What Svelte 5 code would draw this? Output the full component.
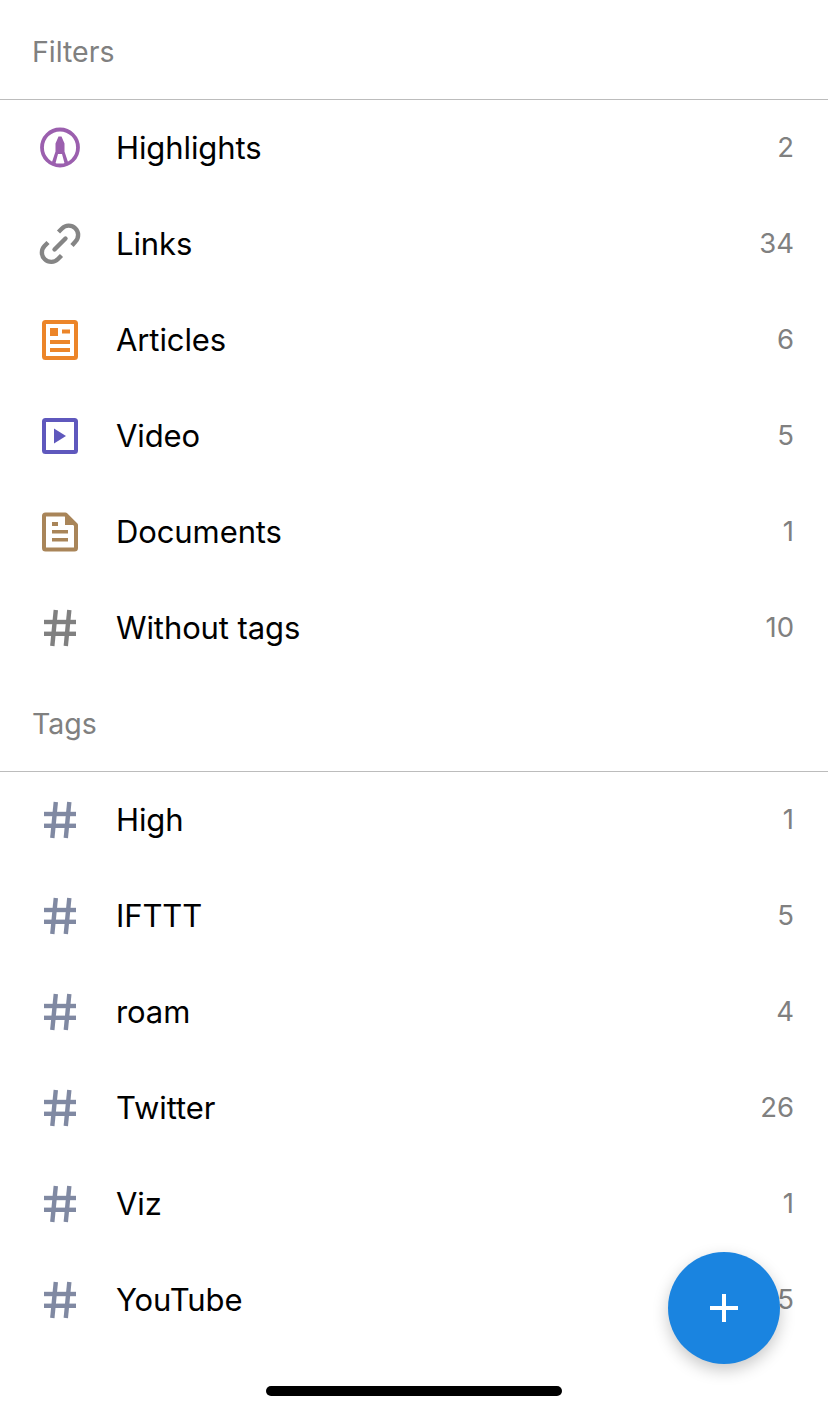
<script>
  const filters = [
    { name: 'Highlights', count: 2, icon: 'highlight' },
    { name: 'Links', count: 34, icon: 'link' },
    { name: 'Articles', count: 6, icon: 'article' },
    { name: 'Video', count: 5, icon: 'video' },
    { name: 'Documents', count: 1, icon: 'doc' },
    { name: 'Without tags', count: 10, icon: 'hashgray' }
  ];
  const tags = [
    { name: 'High', count: 1, icon: 'hash' },
    { name: 'IFTTT', count: 5, icon: 'hash' },
    { name: 'roam', count: 4, icon: 'hash' },
    { name: 'Twitter', count: 26, icon: 'hash' },
    { name: 'Viz', count: 1, icon: 'hash' },
    { name: 'YouTube', count: 5, icon: 'hash' }
  ];
  const sections = [
    { title: 'Filters', items: filters },
    { title: 'Tags', items: tags }
  ];
</script>

{#snippet icon(kind)}
  <svg class="icon" viewBox="0 0 48 48" width="48" height="48" aria-hidden="true">
    {#if kind === 'highlight'}
      <circle cx="24" cy="23.5" r="18" fill="none" stroke="#9b5fae" stroke-width="3.8" />
      <path d="M22.5 12.5 H25.5 L28.5 19.5 V27.5 L33 41 H29 L26 30 H22 L19 41 H15 L19.5 27.5 V19.5 Z" fill="#9b5fae" />
    {:else if kind === 'link'}
      <g fill="none" stroke="#858585" stroke-width="4.4" stroke-linecap="round">
        <path d="M22.5 12 L26 8.5 A8.8 8.8 0 0 1 39.5 21.5 L36 25.5" stroke-linecap="butt" />
        <path d="M25.5 35.5 L22 39 A8.8 8.8 0 0 1 8.5 26 L12 22.5" stroke-linecap="butt" />
        <path d="M18.5 29.5 L29.5 18.5" />
      </g>
    {:else if kind === 'article'}
      <rect x="8" y="6" width="32" height="36" rx="1.5" fill="none" stroke="#ec8529" stroke-width="4" />
      <path d="M14 12h8v8h-8zM26 13.5h8v4h-8zM14 24h20v4H14zM14 32h20v4H14z" fill="#ec8529" />
    {:else if kind === 'video'}
      <rect x="8" y="8" width="32" height="32" rx="1.5" fill="none" stroke="#5f58bd" stroke-width="4" />
      <path d="M18 16.5 L30 24 L18 31.5 Z" fill="#5f58bd" />
    {:else if kind === 'doc'}
      <path d="M9.5 6.5 H29.5 L40 17 V40 A1.5 1.5 0 0 1 38.5 41.5 H9.5 A1.5 1.5 0 0 1 8 40 V8 A1.5 1.5 0 0 1 9.5 6.5 Z" fill="none" stroke="#a98559" stroke-width="4" stroke-linejoin="round" />
      <path d="M29 6 L40 17 H29 Z" fill="#a98559" />
      <path d="M16 14h6v4h-6zM16 22h16v3.5H16zM16 30h16v3.5H16z" fill="#a98559" />
    {:else}
      <g class={kind === 'hash' ? 'hash blue' : 'hash gray'} fill="none" stroke-width="4.4">
        <path d="M19.8 6 L16.3 42" />
        <path d="M33.3 6 L29.8 42" />
        <path d="M8 18 H40" />
        <path d="M8 29.8 H40" />
      </g>
    {/if}
  </svg>
{/snippet}

<main class="page">
  {#each sections as section}
    <section>
      <h2 class="heading">{section.title}</h2>
      <ul class="list">
        {#each section.items as item}
          <li class="row">
            {@render icon(item.icon)}
            <span class="name">{item.name}</span>
            <span class="count">{item.count}</span>
          </li>
        {/each}
      </ul>
    </section>
  {/each}

  <button class="fab" aria-label="Add">
    <svg viewBox="0 0 30 30" width="30" height="30" aria-hidden="true">
      <path d="M13 1h4v12h12v4H17v12h-4V17H1v-4h12z" fill="#fff" />
    </svg>
  </button>
  <div class="home"></div>
</main>

<style>
  :global(body) {
    margin: 0;
    background: #fff;
  }
  .page {
    position: relative;
    width: 828px;
    height: 1412px;
    overflow: hidden;
    font-family: Inter, Roboto, "Liberation Sans", sans-serif;
    background: #fff;
  }
  .heading {
    box-sizing: border-box;
    height: 100px;
    margin: 0;
    padding: 33px 32px 0;
    font-size: 28.5px;
    line-height: 38px;
    font-weight: 400;
    color: #808080;
    border-bottom: 1px solid #bcbcbc;
  }
  section + section .heading {
    height: 96px;
    padding-top: 29px;
  }
  .list {
    list-style: none;
    margin: 0;
    padding: 0;
  }
  .row {
    display: flex;
    align-items: center;
    height: 96px;
    padding: 0 34px 0 36px;
  }
  .icon {
    flex: none;
    margin-right: 32px;
  }
  .hash.blue {
    stroke: #8089a2;
  }
  .hash.gray {
    stroke: #808080;
  }
  .name {
    flex: 1;
    font-size: 31px;
    line-height: 40px;
    letter-spacing: -0.1px;
    color: #000;
  }
  .count {
    font-size: 27.5px;
    line-height: 38px;
    margin-top: -2px;
    color: #808080;
  }
  .fab {
    position: absolute;
    left: 668px;
    top: 1252px;
    width: 112px;
    height: 112px;
    padding: 0;
    border: 0;
    border-radius: 50%;
    background: #1a84e0;
    box-shadow: 0 6px 16px rgba(0, 0, 0, 0.22);
    display: flex;
    align-items: center;
    justify-content: center;
  }
  .home {
    position: absolute;
    left: 266px;
    top: 1386px;
    width: 296px;
    height: 10px;
    border-radius: 5px;
    background: #000;
  }
</style>
